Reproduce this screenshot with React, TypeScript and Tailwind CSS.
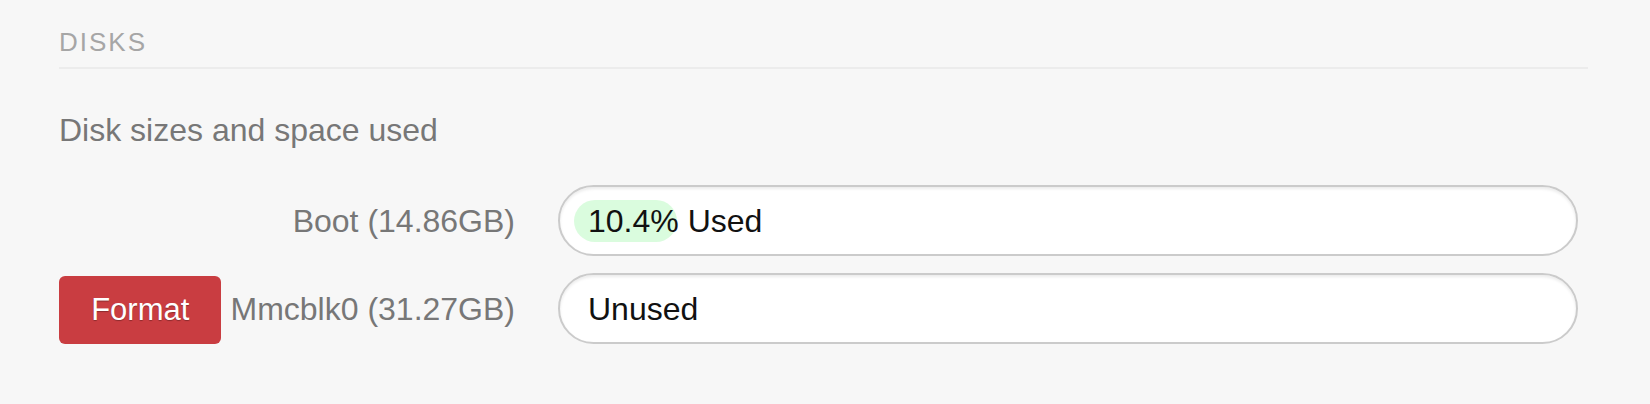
import React from 'react';

interface Disk {
  name: string;
  size: string;
  used: number | null;
  canFormat: boolean;
}

const disks: Disk[] = [
  { name: 'Boot', size: '14.86GB', used: 10.4, canFormat: false },
  { name: 'Mmcblk0', size: '31.27GB', used: null, canFormat: true },
];

function UsageBar({ used }: { used: number | null }) {
  return (
    <div className="flex-1 h-[71px] flex items-center px-[14px] rounded-full border-2 border-[#cbcbcb] bg-white shadow-[inset_0_2px_3px_rgba(0,0,0,0.08)]">
      <div className="relative w-full h-[42px] flex items-center">
        {used !== null && (
          <div
            className="absolute left-0 top-0 h-[42px] rounded-full bg-[#dafcde]"
            style={{ width: `${used}%` }}
          />
        )}
        <span className="relative pl-[14px] text-[32px] leading-[32px] text-[#111]">
          {used !== null ? `${used}% Used` : 'Unused'}
        </span>
      </div>
    </div>
  );
}

export default function App() {
  return (
    <div
      className="min-h-screen bg-[#f7f7f7] pl-[59px] pr-[62px] pt-[29px]"
      style={{ fontFamily: '"Liberation Sans", Arial, sans-serif' }}
    >
      <h2 className="text-[26px] leading-[26px] tracking-[2px] text-[#a6a6a6] pb-[12px] border-b-2 border-[#ececec]">
        DISKS
      </h2>

      <p className="mt-[45px] text-[32px] leading-[32px] text-[#777]">Disk sizes and space used</p>

      <div className="mt-[39px] flex flex-col gap-[17px] pr-[10px]">
        {disks.map((disk) => (
          <div key={disk.name} className="flex items-center h-[71px]">
            <div className="w-[456px] h-full flex items-center justify-end gap-[9px] shrink-0">
              {disk.canFormat && (
                <button className="self-end w-[166px] h-[68px] rounded-[6px] bg-[#c93d41] text-white text-[31px] leading-[32px] [text-shadow:0_1px_1px_rgba(0,0,0,0.3)] mr-auto">
                  Format
                </button>
              )}
              <span className="text-[32px] leading-[32px] text-[#777] whitespace-nowrap">
                {disk.name} ({disk.size})
              </span>
            </div>
            <div className="ml-[43px] flex-1 flex">
              <UsageBar used={disk.used} />
            </div>
          </div>
        ))}
      </div>
    </div>
  );
}
